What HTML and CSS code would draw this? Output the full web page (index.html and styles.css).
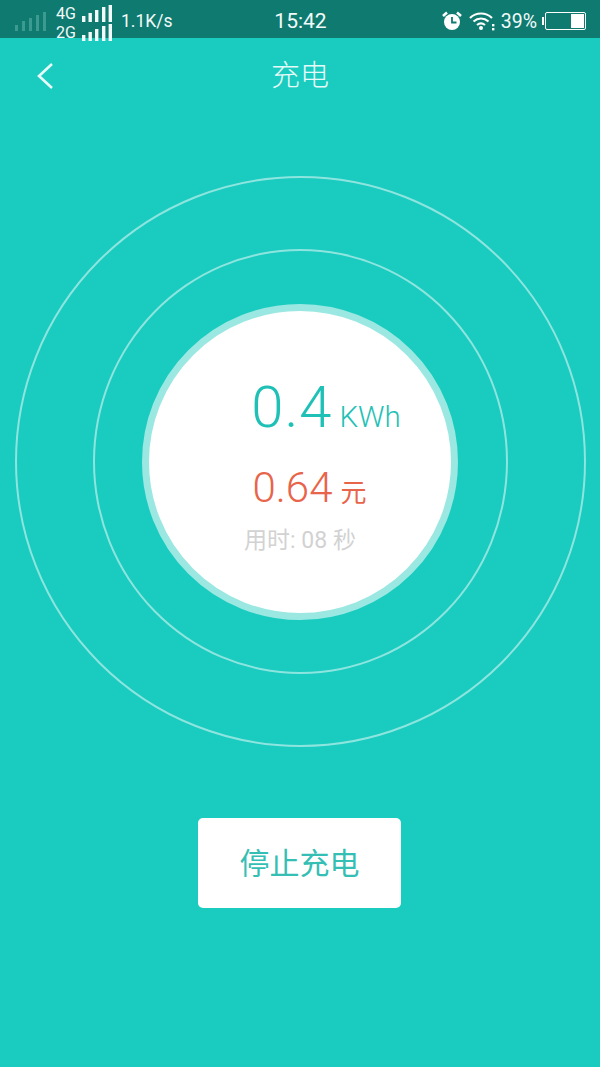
FILE: index.html
```html
<!DOCTYPE html>
<html>

<head>
    <title>充电</title>
    <meta charset="utf-8">
    <link rel="stylesheet" href="styles.css">
</head>

<body>

    <div class="status-bar">
        <div class="status-left">
            <svg class="sim-empty" width="32" height="20" viewBox="0 0 32 20">
                <rect x="0" y="14" width="3" height="6" />
                <rect x="7" y="10" width="3" height="10" />
                <rect x="14" y="7" width="3" height="13" />
                <rect x="21" y="4" width="3" height="16" />
                <rect x="28" y="1" width="3" height="19" />
            </svg>
            <div class="sim-stack">
                <div class="sim-row">
                    <span class="sim-label">4G</span>
                    <svg width="30" height="18" viewBox="0 0 30 18">
                        <rect x="0" y="11" width="3.4" height="6" />
                        <rect x="6.5" y="8" width="3.4" height="9" />
                        <rect x="13" y="5" width="3.4" height="12" />
                        <rect x="20" y="2" width="3.4" height="15" />
                        <rect x="26.6" y="0" width="3.4" height="17" />
                    </svg>
                </div>
                <div class="sim-row">
                    <span class="sim-label">2G</span>
                    <svg width="30" height="18" viewBox="0 0 30 18">
                        <rect x="0" y="11" width="3.4" height="6" />
                        <rect x="6.5" y="8" width="3.4" height="9" />
                        <rect x="13" y="5" width="3.4" height="12" />
                        <rect x="20" y="2" width="3.4" height="15" />
                        <rect x="26.6" y="0" width="3.4" height="17" />
                    </svg>
                </div>
            </div>
            <span class="speed">1.1K/s</span>
        </div>
        <span class="clock">15:42</span>
        <div class="status-right">
            <svg class="alarm" width="20" height="20" viewBox="0 0 20 20">
                <circle cx="10" cy="11" r="8" fill="#fff" />
                <path d="M1 5 L5 1.5 M19 5 L15 1.5" stroke="#fff" stroke-width="2.6" fill="none" />
                <path d="M10 6 V11.5 H14.5" stroke="#0f7a70" stroke-width="1.8" fill="none" />
            </svg>
            <svg width="26" height="20" viewBox="0 0 26 20">
                <path d="M1 7 C7 1 17 1 23 7 M4.5 10.5 C9 6.5 15 6.5 19.5 10.5 M8 14 C10.5 12 13.5 12 16 14" stroke="#fff" stroke-width="2.2" fill="none" />
                <circle cx="12" cy="17" r="2" fill="#fff" />
                <rect x="23" y="13" width="2.4" height="2.4" fill="#fff" />
                <rect x="23" y="17" width="2.4" height="2.4" fill="#fff" />
            </svg>
            <span class="battery-text">39%</span>
            <div class="battery">
                <div class="battery-cap"></div>
                <div class="battery-body">
                    <div class="battery-fill"></div>
                </div>
            </div>
        </div>
    </div>

    <div class="title-bar">
        <svg class="back" width="20" height="28" viewBox="0 0 20 28">
            <path d="M17 2 L4 14 L17 26" stroke="#e6fbf8" stroke-width="2.6" fill="none" />
        </svg>
        <span class="title">充电</span>
    </div>

    <div class="stage">
        <div class="ring ring-outer">
            <div class="ring ring-middle">
                <div class="dial">
                    <div class="kwh"><span class="kwh-num">0.4</span><span class="kwh-unit">KWh</span></div>
                    <div class="cost"><span class="cost-num">0.64</span><span class="cost-unit">元</span></div>
                    <div class="elapsed">用时: 08 秒</div>
                </div>
            </div>
        </div>
    </div>

    <div class="actions">
        <button class="stop-btn">停止充电</button>
    </div>

</body>

</html>
```

FILE: styles.css
```css
body {
    margin: 0;
    height: 1067px;
    overflow: hidden;
    background: #1acbbf;
    font-family: Roboto, "Noto Sans CJK SC", sans-serif;
}

.status-bar {
    height: 38px;
    padding: 0 14px 0 15px;
    background: #0f7a70;
    color: #f2fbfa;
    display: grid;
    grid-template-columns: 1fr auto 1fr;
    align-items: center;
}

.status-left {
    display: flex;
    align-items: center;
}

.status-left svg {
    fill: #f2fbfa;
}

.status-left .sim-empty {
    fill: #3d9a91;
    margin-right: 9px;
}

.sim-stack {
    margin-top: 4px;
    margin-right: 9px;
    display: flex;
    flex-direction: column;
}

.sim-row {
    height: 19px;
    display: flex;
    align-items: center;
    gap: 5px;
    font-size: 16px;
}

.sim-label {
    width: 21px;
}

.speed {
    font-size: 17.5px;
}

.clock {
    font-size: 21px;
}

.status-right {
    display: flex;
    align-items: center;
    justify-content: flex-end;
    gap: 8px;
}

.alarm {
    margin-right: -1px;
    margin-left: 1px;
}

.battery-text {
    font-size: 19.5px;
    margin-left: -2px;
    margin-right: -3px;
}

.battery {
    display: flex;
    align-items: center;
}

.battery-cap {
    width: 2px;
    height: 8px;
    background: #fff;
}

.battery-body {
    width: 37px;
    height: 14px;
    margin-left: 1px;
    padding: 1px;
    border: 1px solid #fff;
    border-radius: 2px;
    display: flex;
    justify-content: flex-end;
}

.battery-fill {
    width: 13px;
    background: #fff;
}

.title-bar {
    position: relative;
    height: 75px;
    display: flex;
    align-items: center;
    justify-content: center;
}

.back {
    position: absolute;
    left: 35px;
    top: 24px;
}

.title {
    margin-bottom: 5px;
    color: #e6fbf8;
    font-size: 29px;
    font-weight: 300;
}

.stage {
    padding-top: 63px;
    display: flex;
    justify-content: center;
}

.ring {
    box-sizing: border-box;
    border: 2px solid rgba(255, 255, 255, 0.5);
    border-radius: 50%;
    display: flex;
    align-items: center;
    justify-content: center;
}

.ring-outer {
    width: 571px;
    height: 571px;
}

.ring-middle {
    width: 415px;
    height: 425px;
}

.dial {
    box-sizing: border-box;
    width: 316px;
    height: 316px;
    border: 7px solid #9be8e2;
    border-radius: 50%;
    background: #fff;
    display: flex;
    flex-direction: column;
    align-items: center;
}

.kwh {
    margin-top: 62px;
    margin-left: 52px;
    height: 68px;
    color: #1fc1b6;
    white-space: nowrap;
}

.kwh-num {
    font-size: 58px;
    font-weight: 300;
    letter-spacing: 1px;
}

.kwh-unit {
    margin-left: 7px;
    font-size: 29.5px;
    font-weight: 300;
}

.cost {
    margin-top: 22px;
    margin-left: 19px;
    height: 50px;
    color: #e8644a;
    white-space: nowrap;
}

.cost-num {
    font-size: 42px;
    font-weight: 300;
}

.cost-unit {
    margin-left: 8px;
    font-size: 26px;
}

.elapsed {
    margin-top: 8px;
    color: #d2d2d2;
    font-size: 23px;
}

.actions {
    padding: 71px 1px 0 0;
    display: flex;
    justify-content: center;
}

.stop-btn {
    width: 203px;
    height: 90px;
    padding-bottom: 6px;
    border: none;
    border-radius: 5px;
    background: #fff;
    color: #35bfb4;
    font-family: inherit;
    font-size: 30px;
}
```
